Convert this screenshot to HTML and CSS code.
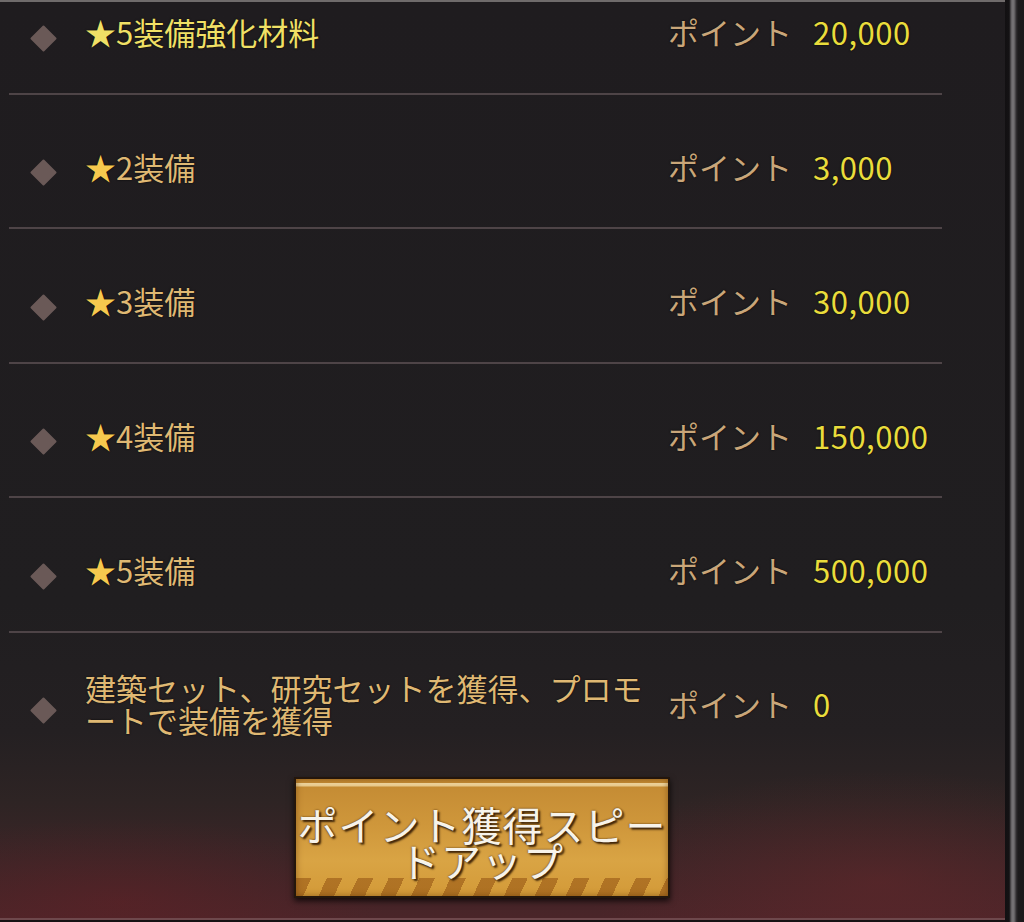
FILE: index.html
```html
<!DOCTYPE html>
<html lang="ja">
<head>
<meta charset="utf-8">
<link rel="stylesheet" href="styles.css">
</head>
<body>
<div class="screen">
  <div class="panel">
    <ul class="list">
      <li class="row">
        <span class="diamond"></span>
        <span class="label label-hl">★5装備強化材料</span>
        <span class="pt">ポイント</span>
        <span class="val">20,000</span>
      </li>
      <li class="row">
        <span class="diamond"></span>
        <span class="label"><span class="star">★</span>2装備</span>
        <span class="pt">ポイント</span>
        <span class="val">3,000</span>
      </li>
      <li class="row">
        <span class="diamond"></span>
        <span class="label"><span class="star">★</span>3装備</span>
        <span class="pt">ポイント</span>
        <span class="val">30,000</span>
      </li>
      <li class="row">
        <span class="diamond"></span>
        <span class="label"><span class="star">★</span>4装備</span>
        <span class="pt">ポイント</span>
        <span class="val">150,000</span>
      </li>
      <li class="row">
        <span class="diamond"></span>
        <span class="label"><span class="star">★</span>5装備</span>
        <span class="pt">ポイント</span>
        <span class="val">500,000</span>
      </li>
      <li class="row row-last">
        <span class="diamond"></span>
        <span class="label label-multi">建築セット、研究セットを獲得、プロモートで装備を獲得</span>
        <span class="pt">ポイント</span>
        <span class="val">0</span>
      </li>
    </ul>
    <div class="actions">
      <button class="speed-btn"><span class="btn-text">ポイント獲得スピードアップ</span></button>
    </div>
  </div>
  <div class="frame"></div>
</div>
</body>
</html>
```

FILE: styles.css
```css
html, body {
  margin: 0;
  padding: 0;
  background: #171113;
}

body {
  width: 1024px;
  height: 922px;
  overflow: hidden;
  font-family: "Noto Sans CJK JP", "Noto Sans", sans-serif;
}

.screen {
  display: flex;
  height: 922px;
}

.panel {
  flex: 1;
  height: 916px;
  overflow: hidden;
  border-top: 2px solid #6f6b6b;
  border-bottom: 2px solid #6e484c;
  background:
    radial-gradient(ellipse 420px 160px at 880px 880px, rgba(120, 40, 44, 0.35), rgba(0,0,0,0) 70%),
    radial-gradient(ellipse 380px 120px at 120px 900px, rgba(110, 30, 36, 0.35), rgba(0,0,0,0) 70%),
    linear-gradient(180deg, #1f1c1f 0px, #201e20 600px, #242022 730px, #2e2424 800px, #3c2527 860px, #4a2529 916px);
  display: flex;
  flex-direction: column;
}

.list {
  list-style: none;
  margin: -42px 0 0 9px;
  padding: 0;
  width: 933px;
}

.row {
  display: flex;
  align-items: center;
  box-sizing: border-box;
  height: 134.5px;
  padding-top: 12px;
  padding-left: 25px;
  border-bottom: 2px solid #4e4447;
  text-shadow: 0 0 2px rgba(0, 0, 0, 0.9);
}

.row-last {
  border-bottom: none;
  height: 132.5px;
  padding-top: 11px;
}

.diamond {
  flex: none;
  width: 19px;
  height: 19px;
  margin-top: 12px;
  margin-right: 32px;
  background: #6a5957;
  transform: rotate(45deg);
  border-radius: 1px;
}

.label {
  flex: none;
  width: 583px;
  font-size: 31px;
  line-height: 40px;
  color: #dfb873;
}

.label-hl {
  color: #f0e066;
}

.star {
  color: #f6c94e;
}

.label-multi {
  line-height: 32px;
}

.pt {
  flex: none;
  font-size: 31px;
  line-height: 40px;
  color: #c9a679;
  margin-right: 21px;
}

.val {
  font-size: 31px;
  line-height: 40px;
  letter-spacing: 0.5px;
  color: #e9dc3c;
}

.actions {
  padding-left: 294px;
  margin-top: 12px;
}

.speed-btn {
  display: flex;
  flex-direction: column;
  justify-content: flex-start;
  align-items: center;
  box-sizing: border-box;
  width: 376px;
  height: 121px;
  padding: 27px 0 0 0;
  border: 2px solid #24160c;
  background:
    linear-gradient(180deg, rgba(0,0,0,0) 0, rgba(0,0,0,0) 4px, #f3dba4 4px, #e8c98a 7px, rgba(0,0,0,0) 8px),
    repeating-linear-gradient(115deg, rgba(150, 86, 20, 0.6) 0 14px, rgba(0,0,0,0) 14px 28px) bottom / 100% 18px no-repeat,
    linear-gradient(180deg, #c38a33 0%, #cf973b 40%, #d9a444 70%, #d39a38 100%);
  box-shadow: 0 3px 6px rgba(0, 0, 0, 0.75), inset 0 0 6px rgba(80, 40, 0, 0.5);
  cursor: pointer;
  text-align: center;
  font-family: "Noto Sans CJK JP", "Noto Sans", sans-serif;
}

.btn-text {
  display: block;
  width: 100%;
  font-size: 40px;
  letter-spacing: 1px;
  line-height: 36px;
  color: #f7f3ea;
  text-shadow: 2px 2px 2px #3b2208, 0 0 2px #4a2a0a;
}

.frame {
  flex: none;
  width: 19px;
  height: 922px;
  background: linear-gradient(90deg, #121012 0, #141214 4px, #2c2a2c 5px, #5e5c5e 6px, #7a787a 8px, #5a585a 10px, #343234 11px, #1c1b1c 13px, #1a191a 19px);
}
```
